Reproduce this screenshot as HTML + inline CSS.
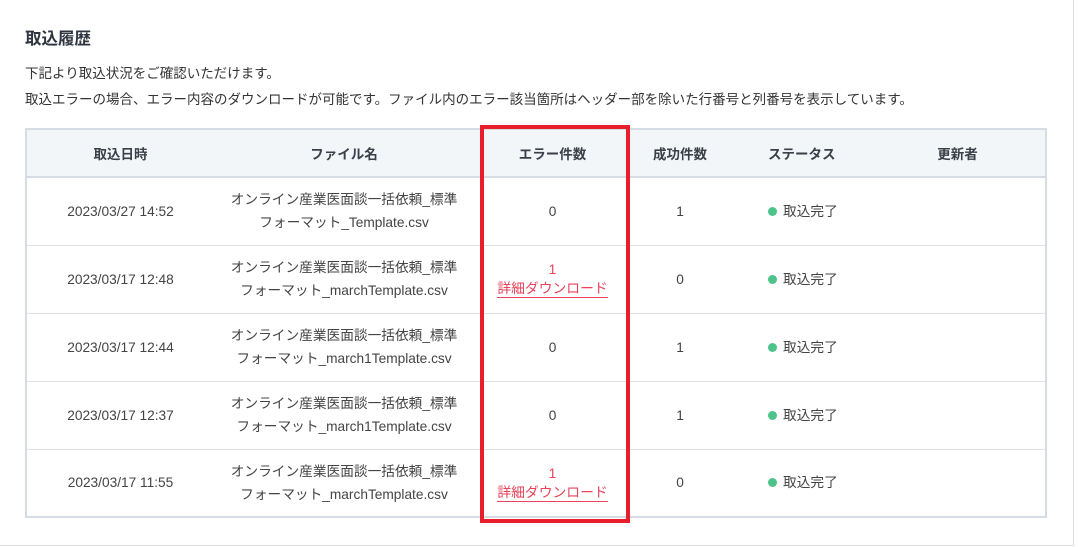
<!DOCTYPE html>
<html><head><meta charset="utf-8"><style>
*{margin:0;padding:0;box-sizing:border-box}
body{width:1078px;height:547px;background:#fff;font-family:"Liberation Sans","Noto Sans CJK JP",sans-serif;color:#333;position:relative;overflow:hidden}
.card{position:absolute;left:-2px;top:-2px;width:1076px;height:548px;border:1px solid #dcdfe4;background:#fff}
h1{position:absolute;left:25px;top:25px;font-size:16.5px;font-weight:bold;color:#2f3540}
.p{position:absolute;left:25px;font-size:13.5px;color:#333}
table{position:absolute;left:25px;top:128px;width:1022px;border-collapse:collapse;border:2px solid #d6dce4;font-size:13.7px}
th{background:#f3f6f9;height:48px;font-weight:bold;color:#3a3f48;border-bottom:2px solid #d6dce4;font-size:13.5px}
td{text-align:center;border-bottom:1px solid #dde2e8;color:#444;line-height:23px}
tr.r td{height:68px}
.st{text-align:left;padding-left:39px}
.dot{display:inline-block;width:9px;height:9px;border-radius:50%;background:#4cc38a;margin-right:6px;vertical-align:0px}
.err{color:#e8435a;line-height:19px;font-size:13.8px}
.err span{border-bottom:1px solid #e8435a;padding-bottom:1px}
.box{position:absolute;left:480px;top:125px;width:150px;height:398px;border:4px solid #e81f2a}
</style></head><body>
<div class="card"></div>
<h1>取込履歴</h1>
<div class="p" style="top:62px">下記より取込状況をご確認いただけます。</div>
<div class="p" style="top:88px">取込エラーの場合、エラー内容のダウンロードが可能です。ファイル内のエラー該当箇所はヘッダー部を除いた行番号と列番号を表示しています。</div>
<table>
<colgroup><col style="width:188px"><col style="width:260px"><col style="width:157px"><col style="width:98px"><col style="width:141px"><col></colgroup>
<tr><th>取込日時</th><th>ファイル名</th><th>エラー件数</th><th>成功件数</th><th style="text-align:left;padding-left:39px">ステータス</th><th>更新者</th></tr>
<tr class="r"><td>2023/03/27 14:52</td><td>オンライン産業医面談一括依頼_標準<br>フォーマット_Template.csv</td><td>0</td><td>1</td><td class="st"><i class="dot"></i>取込完了</td><td></td></tr>
<tr class="r"><td>2023/03/17 12:48</td><td>オンライン産業医面談一括依頼_標準<br>フォーマット_marchTemplate.csv</td><td class="err">1<br><span>詳細ダウンロード</span></td><td>0</td><td class="st"><i class="dot"></i>取込完了</td><td></td></tr>
<tr class="r"><td>2023/03/17 12:44</td><td>オンライン産業医面談一括依頼_標準<br>フォーマット_march1Template.csv</td><td>0</td><td>1</td><td class="st"><i class="dot"></i>取込完了</td><td></td></tr>
<tr class="r"><td>2023/03/17 12:37</td><td>オンライン産業医面談一括依頼_標準<br>フォーマット_march1Template.csv</td><td>0</td><td>1</td><td class="st"><i class="dot"></i>取込完了</td><td></td></tr>
<tr class="r"><td>2023/03/17 11:55</td><td>オンライン産業医面談一括依頼_標準<br>フォーマット_marchTemplate.csv</td><td class="err">1<br><span>詳細ダウンロード</span></td><td>0</td><td class="st"><i class="dot"></i>取込完了</td><td></td></tr>
</table>
<div class="box"></div>
</body></html>
